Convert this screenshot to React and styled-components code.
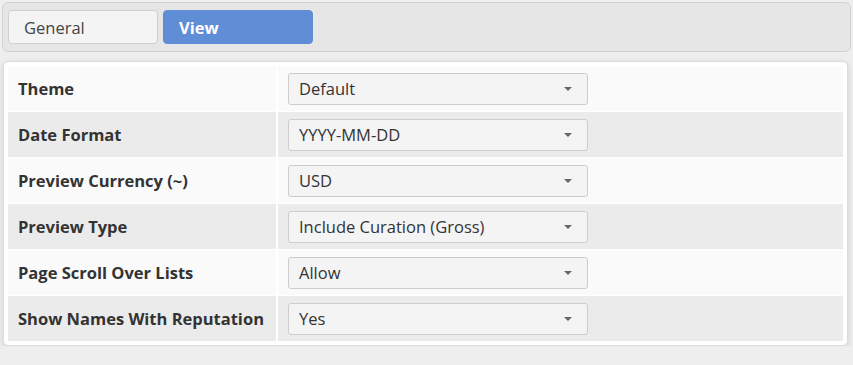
import React from "react";
import styled, { createGlobalStyle } from "styled-components";

const GlobalStyle = createGlobalStyle`
  body {
    margin: 0;
    background: #eeeeee;
    font-family: "Open Sans", "Liberation Sans", sans-serif;
    color: #333;
  }
`;

const ROWS = [
  { label: "Theme", value: "Default" },
  { label: "Date Format", value: "YYYY-MM-DD" },
  { label: "Preview Currency (~)", value: "USD" },
  { label: "Preview Type", value: "Include Curation (Gross)" },
  { label: "Page Scroll Over Lists", value: "Allow" },
  { label: "Show Names With Reputation", value: "Yes" },
];

export default function App() {
  return (
    <Page>
      <GlobalStyle />
      <TabBar>
        <Tab>General</Tab>
        <Tab active>View</Tab>
      </TabBar>
      <Panel>
        <Table>
          {ROWS.map((row, i) => (
            <Row key={row.label} shaded={i % 2 === 1}>
              <Label>{row.label}</Label>
              <Cell>
                <Select>
                  <span>{row.value}</span>
                  <Caret />
                </Select>
              </Cell>
            </Row>
          ))}
        </Table>
      </Panel>
    </Page>
  );
}

const Page = styled.div`
  padding: 2px 2px 0 2px;
`;

const TabBar = styled.div`
  display: flex;
  gap: 5px;
  height: 50px;
  box-sizing: border-box;
  padding: 7px 5px;
  background: #e6e6e6;
  border: 1px solid #d2d2d2;
  border-radius: 6px;
`;

const Tab = styled.div`
  display: flex;
  align-items: center;
  width: 150px;
  box-sizing: border-box;
  padding-left: 15px;
  font-size: 16.5px;
  font-weight: ${props => (props.active ? 700 : 400)};
  color: ${props => (props.active ? "#fff" : "#444")};
  background: ${props => (props.active ? "#5f8dd6" : "#f4f4f4")};
  border: 1px solid ${props => (props.active ? "#5f8dd6" : "#cfcfcf")};
  border-radius: 4px;
`;

const Panel = styled.div`
  margin: 9px 3px 0 1px;
  padding: 4px 4px 4px 4px;
  background: #fff;
  border: 1px solid #dcdcdc;
  border-radius: 5px;
  box-shadow: 0 2px 6px rgba(0, 0, 0, 0.12);
`;

const Table = styled.div`
  display: flex;
  flex-direction: column;
`;

const Row = styled.div`
  display: grid;
  grid-template-columns: 268px 1fr;
  column-gap: 2px;
  height: 45px;
  margin-bottom: 1px;
  background: #fff;
  & > * {
    background: ${props => (props.shaded ? "#ebebeb" : "#fafafa")};
  }
  &:last-child {
    margin-bottom: 0;
  }
`;

const Label = styled.div`
  display: flex;
  align-items: center;
  padding-left: 10px;
  font-size: 16.5px;
  font-weight: 700;
  color: #333;
`;

const Cell = styled.div`
  display: flex;
  align-items: center;
  padding-left: 10px;
`;

const Select = styled.div`
  display: flex;
  align-items: center;
  justify-content: space-between;
  width: 300px;
  height: 32px;
  box-sizing: border-box;
  padding: 0 15px 0 10px;
  font-size: 16.5px;
  color: #333;
  background: #f4f4f4;
  border: 1px solid #cccccc;
  border-radius: 3px;
`;

const Caret = styled.span`
  width: 0;
  height: 0;
  border-left: 4px solid transparent;
  border-right: 4px solid transparent;
  border-top: 4px solid #666;
`;
